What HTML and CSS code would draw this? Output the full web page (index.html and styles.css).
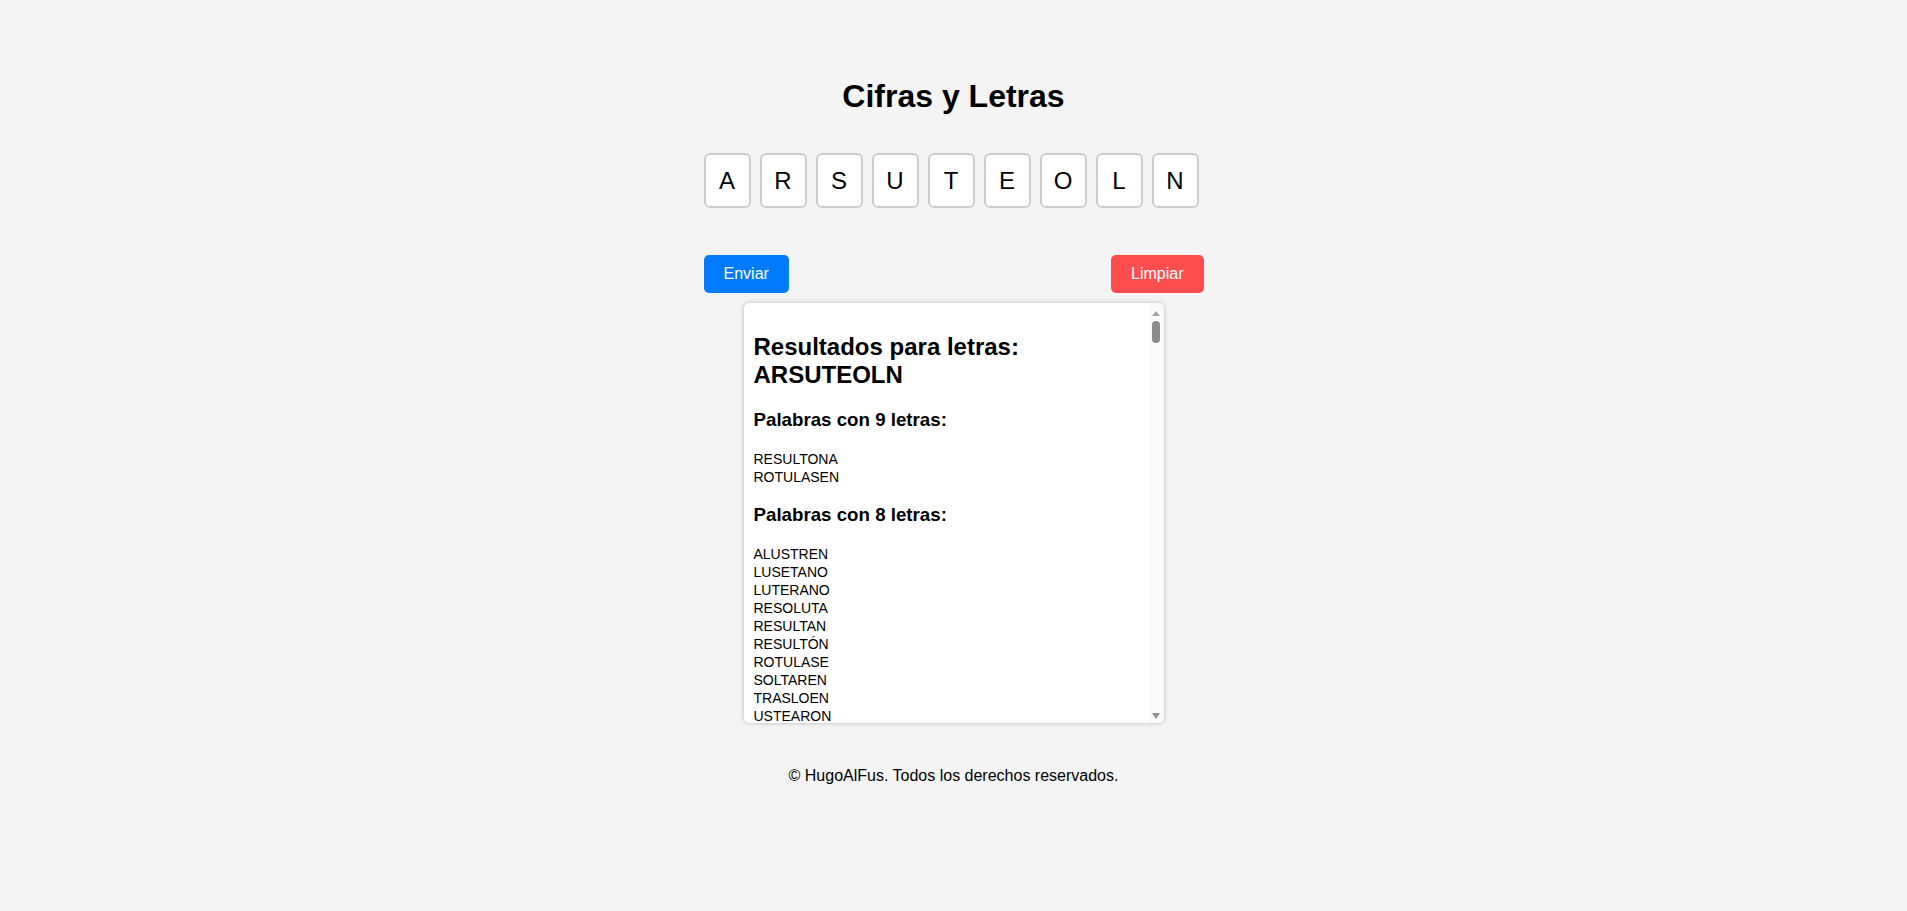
FILE: index.html
```html
<!DOCTYPE html>
<html lang="es">
<head>
<meta charset="utf-8">
<title>Cifras y Letras</title>
<link rel="stylesheet" href="styles.css">
</head>
<body>
<main class="app">
  <h1 class="title">Cifras y Letras</h1>
  <div class="tiles">
    <div class="tile">A</div>
    <div class="tile">R</div>
    <div class="tile">S</div>
    <div class="tile">U</div>
    <div class="tile">T</div>
    <div class="tile">E</div>
    <div class="tile">O</div>
    <div class="tile">L</div>
    <div class="tile">N</div>
  </div>
  <div class="actions">
    <button class="btn btn-send" type="button">Enviar</button>
    <button class="btn btn-clear" type="button">Limpiar</button>
  </div>
</main>
<section class="results">
  <div class="results-body">
    <h2>Resultados para letras: ARSUTEOLN</h2>
    <h3>Palabras con 9 letras:</h3>
    <div class="words">RESULTONA<br>ROTULASEN</div>
    <h3>Palabras con 8 letras:</h3>
    <div class="words">ALUSTREN<br>LUSETANO<br>LUTERANO<br>RESOLUTA<br>RESULTAN<br>RESULTÓN<br>ROTULASE<br>SOLTAREN<br>TRASLOEN<br>USTEARON</div>
    <h3>Palabras con 7 letras:</h3>
    <div class="words">ALTERNO<br>ALUSTRE<br>ANTEROS<br>ARTESÓN<br>ATRONES<br>AUSTERO<br>AUTORES<br>ENLUTAS<br>ENLUTOS<br>ENTOLAS<br>LATONES<br>LOTERAS<br>LUNARES<br>LUNETAS<br>LUSTRAN<br>LUSTREN<br>NEUTRAL<br>NEUTRAS<br>NEUTROS<br>NOTARES<br>RELATOS<br>RESULTA<br>RESULTO<br>ROTULAN<br>ROTULAS<br>ROTULEN<br>ROTULES<br>RUANTES<br>SALTERO<br>SOLTARE<br>SOLTERA<br>TALONES<br>TOLERAS<br>TOLERAN<br>TORNEAS<br>TRUENAS<br>TRUENOS</div>
    <h3>Palabras con 6 letras:</h3>
    <div class="words">ALERÓN<br>ALTERO<br>ANTERO<br>ANTROS<br>ASENTÓ<br>ASUNTO<br>ATRONE<br>AUSTRO<br>ENLUTA<br>ENLUTO<br>ENTOLA<br>ESTOLA<br>ESTUAR<br>LANERO<br>LASTRE<br>LATONE<br>LEONAS<br>LONETA<br>LUNETA<br>LUSTRA<br>LUSTRE<br>LUSTRO<br>NORTES<br>RELATO<br>RENTAS<br>RESTAN<br>ROTULA<br>ROTULE<br>SALTEO<br>SALTEN<br>SOLTAR<br>SOLTEN<br>SULTAN<br>TENSOR<br>TERNOS<br>TOLERA<br>TORNEA<br>TRUENA<br>TRUENO<br>USTEAR</div>
    <h3>Palabras con 5 letras:</h3>
    <div class="words">ALERO<br>ALTOS<br>ANTES<br>ASTRO<br>AUTOR<br>ENTRA<br>ESTAR<br>LAURO<br>LEONA<br>LETRA<br>LOTES<br>LUNAR<br>LUNAS<br>LUNES<br>LUTOS<br>NATOS<br>NORTE<br>NOTAR<br>NOTAS<br>NUERA<br>OSTRA<br>OTRAS<br>RATÓN<br>RENAL<br>RENTA<br>RESTA<br>RESTO<br>ROTAS<br>RUNAS<br>SALTO<br>SOLAR<br>SONAR<br>SUELA<br>SUELO<br>SUENA<br>SUERO<br>TALÓN<br>TELAS<br>TENOR<br>TERSO<br>TORNA<br>TRONA<br>TUNAS<br>TURNO<br>ULTRA<br>UNTAR<br>URNAS</div>
    <h3>Palabras con 4 letras:</h3>
    <div class="words">ALTO<br>ANTE<br>AROS<br>ARTE<br>ASNO<br>ATEO<br>ATÚN<br>AUTO<br>ESTA<br>ESTO<br>LATO<br>LOAR<br>LONA<br>LOSA<br>LOTE<br>LUNA<br>LUTO<br>NATO<br>NOTA<br>OLAS<br>ORAL<br>ORLA<br>OSAR<br>OTRA<br>RATO<br>RENO<br>ROSA<br>ROTA<br>RUTA<br>SALE<br>SANO<br>SETA<br>SOLA<br>SOTA<br>TELA<br>TRAS<br>TUNA<br>UNAS<br>UNOS<br>URNA</div>
    <h3>Palabras con 3 letras:</h3>
    <div class="words">ANO<br>ERA<br>ESA<br>ESO<br>LAS<br>LOS<br>NOS<br>OSO<br>SAL<br>SOL<br>SON<br>SUR<br>TAL<br>TAN<br>TOS<br>UNA<br>UNO<br>USO</div>
  </div>
  <div class="scrollbar" aria-hidden="true">
    <span class="sb-up"></span>
    <span class="sb-thumb"></span>
    <span class="sb-down"></span>
  </div>
</section>
<footer class="footer">© HugoAlFus. Todos los derechos reservados.</footer>
</body>
</html>
```
FILE: styles.css
```css
* {
  box-sizing: border-box;
}

html,
body {
  margin: 0;
}

body {
  background: #f4f4f4;
  font-family: "Liberation Sans", Arial, sans-serif;
  color: #000;
}

.app {
  width: 500px;
  margin: 0 auto;
  padding-top: 78px;
}

.title {
  margin: 0 0 38px;
  font-size: 32px;
  font-weight: bold;
  text-align: center;
}

.tiles {
  display: flex;
  gap: 9px;
}

.tile {
  width: 47px;
  height: 55px;
  display: flex;
  align-items: center;
  justify-content: center;
  background: #fff;
  border: 2px solid #ccc;
  border-radius: 6px;
  font-size: 24px;
}

.actions {
  display: flex;
  justify-content: space-between;
  margin-top: 47px;
}

.btn {
  border: 0;
  border-radius: 5px;
  padding: 10px 20px;
  font-family: "Liberation Sans", Arial, sans-serif;
  font-size: 16px;
  line-height: normal;
  color: #fff;
  cursor: pointer;
}

.btn-send {
  background: #007bff;
}

.btn-clear {
  background: #ff4d4d;
}

.results {
  display: flex;
  width: 420px;
  height: 420px;
  margin: 10px auto 0;
  background: #fff;
  border-radius: 5px;
  box-shadow: 0 0 4px rgba(0, 0, 0, 0.25);
  overflow: hidden;
}

.results-body {
  flex: 1;
  min-width: 0;
  padding: 10px;
  overflow: hidden;
}

.results-body h2 {
  font-size: 24px;
  margin: 19.92px 0;
}

.results-body h3 {
  font-size: 18.72px;
  margin: 18.72px 0;
}

.words {
  font-size: 14px;
  line-height: 18px;
}

.scrollbar {
  width: 15px;
  flex: none;
  display: flex;
  flex-direction: column;
  align-items: center;
  padding: 8px 0 4px;
  background: #fafafa;
}

.sb-up {
  width: 0;
  height: 0;
  border-left: 4.5px solid transparent;
  border-right: 4.5px solid transparent;
  border-bottom: 5px solid #a3a3a3;
}

.sb-thumb {
  width: 8px;
  height: 22px;
  margin-top: 5px;
  border-radius: 4px;
  background: #8c8c8c;
}

.sb-down {
  width: 0;
  height: 0;
  margin-top: auto;
  border-left: 4.5px solid transparent;
  border-right: 4.5px solid transparent;
  border-top: 6px solid #8f8f8f;
}

.footer {
  margin-top: 44px;
  text-align: center;
  font-size: 16px;
}
```
